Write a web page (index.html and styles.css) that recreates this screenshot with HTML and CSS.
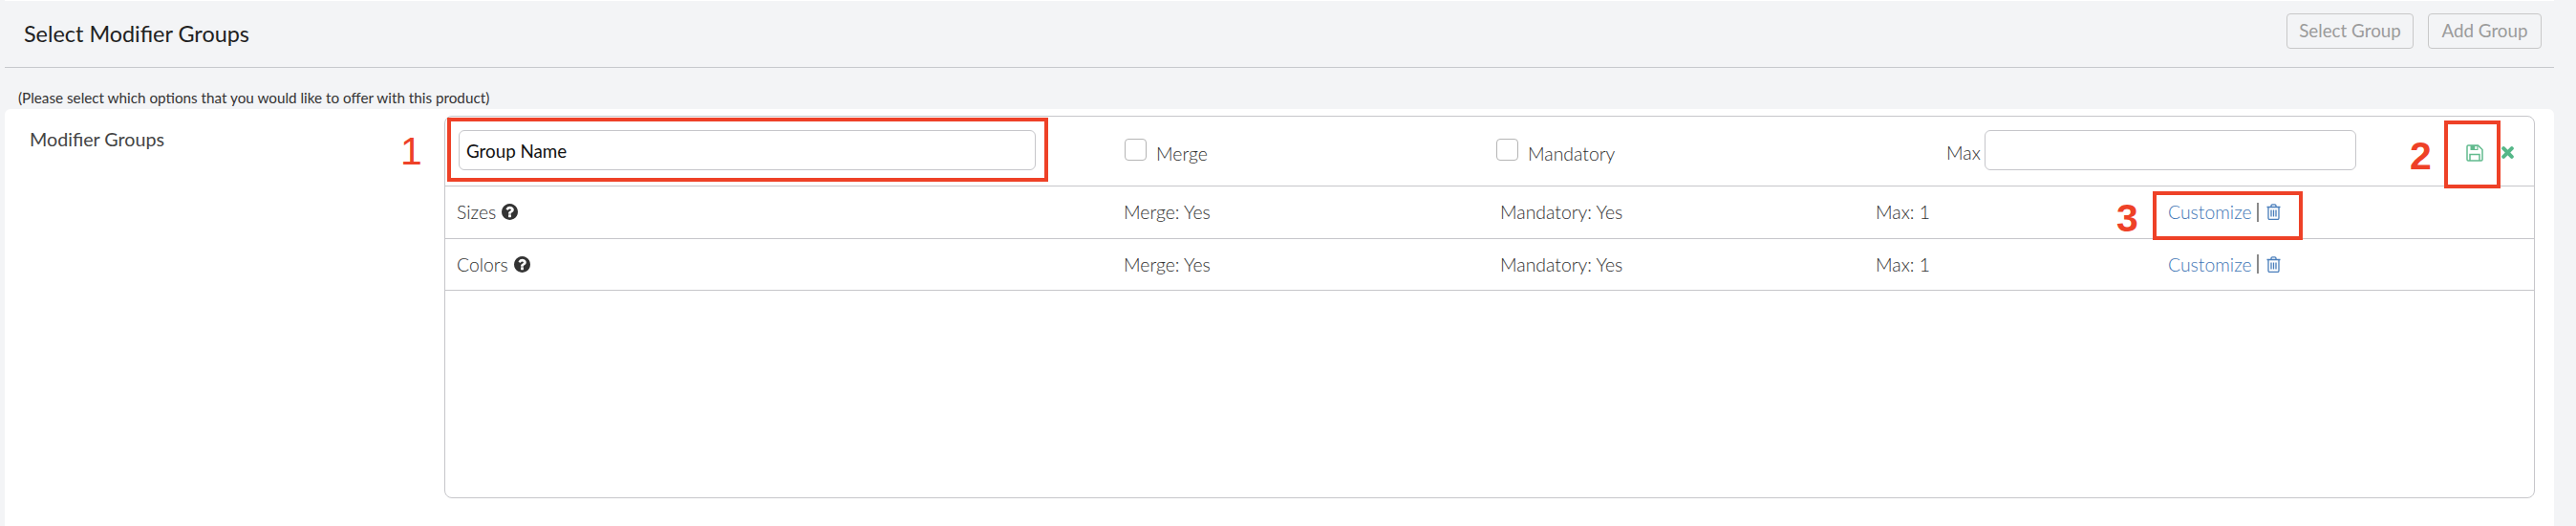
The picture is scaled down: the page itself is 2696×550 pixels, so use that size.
FILE: index.html
```html
<!DOCTYPE html>
<html lang="en">
<head>
<meta charset="utf-8">
<title>Select Modifier Groups</title>
<link rel="stylesheet" href="styles.css">
</head>
<body>
<div class="page">
  <header class="head">
    <h1 class="title">Select Modifier Groups</h1>
    <div class="head-actions">
      <button class="btn btn-select" type="button">Select Group</button>
      <button class="btn btn-add" type="button">Add Group</button>
    </div>
  </header>
  <p class="note">(Please select which options that you would like to offer with this product)</p>
  <section class="panel">
    <div class="panel-label">Modifier Groups</div>
    <div class="table">
      <div class="row-edit">
        <div class="cell-name"><input class="field field-name" type="text" placeholder="Group Name"></div>
        <label class="check"><span class="box"></span>Merge</label>
        <label class="check"><span class="box"></span>Mandatory</label>
        <div class="cell-max"><span class="max-label">Max</span><input class="field field-max" type="text"></div>
        <div class="cell-tools">
          <svg class="ico-save" viewBox="0 0 18 18" aria-hidden="true"><path class="line" d="M1 2.2A1.2 1.2 0 0 1 2.200 1H12.500L17 5.500V15.800A1.200 1.200 0 0 1 15.800 17H2.200A1.200 1.200 0 0 1 1 15.800Z"/><path class="line" d="M4 17V10.500H14V17"/><path class="solid" d="M4.500 1H12.500V6H4.500Z"/><path class="hole" d="M9.300 2H11.300V5H9.300Z"/></svg>
          <svg class="ico-x" viewBox="0 0 13 13" aria-hidden="true"><path d="M2.200 2.200L10.800 10.800M10.800 2.200L2.200 10.800"/></svg>
        </div>
      </div>
      <div class="row">
        <div class="name">Sizes <svg class="ico-help" viewBox="0 0 1536 1536" aria-hidden="true"><path d="M896 1248v-192q0-14-9-23t-23-9h-192q-14 0-23 9t-9 23v192q0 14 9 23t23 9h192q14 0 23-9t9-23zm256-672q0-88-55.500-163t-138.500-116-170-41q-243 0-371 213-15 24 8 42l132 100q7 6 19 6 16 0 25-12 53-68 86-92 34-24 86-24 48 0 85.500 26t37.500 59q0 38-20 61t-68 45q-63 28-115.500 86.500t-52.500 125.500v36q0 14 9 23t23 9h192q14 0 23-9t9-23q0-19 21.500-49.500t54.500-49.500q32-18 49-28.500t46-35 44.500-48 28-60.500 12.500-81zm384 192q0 209-103 385.500t-279.500 279.500-385.500 103-385.500-103-279.500-279.500-103-385.500 103-385.500 279.500-279.500 385.500-103 385.500 103 279.500 279.500 103 385.500z"/></svg></div>
        <div>Merge: Yes</div>
        <div>Mandatory: Yes</div>
        <div>Max: 1</div>
        <div class="links"><a class="link">Customize</a><span class="sep"></span><svg class="ico-trash" viewBox="0 0 15 17" aria-hidden="true"><path d="M.5 3.500H14.500M2 3.500V15A1.500 1.500 0 0 0 3.500 16.500H11.500A1.500 1.500 0 0 0 13 15V3.500M5 3.500V1.800A1.200 1.200 0 0 1 6.200.8H8.800A1.200 1.200 0 0 1 10 1.800V3.500M5 6.500V13.500M7.500 6.500V13.500M10 6.500V13.500"/></svg></div>
      </div>
      <div class="row row-short">
        <div class="name">Colors <svg class="ico-help" viewBox="0 0 1536 1536" aria-hidden="true"><path d="M896 1248v-192q0-14-9-23t-23-9h-192q-14 0-23 9t-9 23v192q0 14 9 23t23 9h192q14 0 23-9t9-23zm256-672q0-88-55.500-163t-138.500-116-170-41q-243 0-371 213-15 24 8 42l132 100q7 6 19 6 16 0 25-12 53-68 86-92 34-24 86-24 48 0 85.500 26t37.500 59q0 38-20 61t-68 45q-63 28-115.500 86.500t-52.500 125.500v36q0 14 9 23t23 9h192q14 0 23-9t9-23q0-19 21.500-49.500t54.500-49.500q32-18 49-28.500t46-35 44.500-48 28-60.500 12.500-81zm384 192q0 209-103 385.500t-279.500 279.500-385.500 103-385.500-103-279.500-279.500-103-385.500 103-385.500 279.500-279.500 385.500-103 385.500 103 279.500 279.500 103 385.500z"/></svg></div>
        <div>Merge: Yes</div>
        <div>Mandatory: Yes</div>
        <div>Max: 1</div>
        <div class="links"><a class="link">Customize</a><span class="sep"></span><svg class="ico-trash" viewBox="0 0 15 17" aria-hidden="true"><path d="M.5 3.500H14.500M2 3.500V15A1.500 1.500 0 0 0 3.500 16.500H11.500A1.500 1.500 0 0 0 13 15V3.500M5 3.500V1.800A1.200 1.200 0 0 1 6.200.8H8.800A1.200 1.200 0 0 1 10 1.800V3.500M5 6.500V13.500M7.500 6.500V13.500M10 6.500V13.500"/></svg></div>
      </div>
    </div>
  </section>
  <div class="mark mark-1"></div>
  <div class="mark mark-2"></div>
  <div class="mark mark-3"></div>
  <span class="num num-1">1</span>
  <span class="num num-2">2</span>
  <span class="num num-3">3</span>
</div>
</body>
</html>
```
FILE: styles.css
```css
* { box-sizing: border-box; }
html, body { margin: 0; height: 100%; overflow: hidden; }
body {
  background: #f3f4f6;
  color: #333;
  font-family: Lato, "Liberation Sans", sans-serif;
}
.page {
  position: relative;
  height: 550px;
  padding: 0 23px 0 5px;
  display: flex;
  flex-direction: column;
}
.head {
  height: 71px;
  flex: none;
  border-top: 1px solid #fff;
  border-bottom: 1px solid #c6c8cc;
  padding: 13px 13px 0 20px;
  display: flex;
  justify-content: space-between;
  align-items: flex-start;
}
.title {
  margin: 6px 0 0;
  font-size: 23.4px;
  line-height: 30px;
  font-weight: 400;
  color: #222;
}
.head-actions { display: flex; gap: 15px; }
.btn {
  height: 37px;
  background: transparent;
  border: 1px solid #c8c8c8;
  border-radius: 4px;
  color: #9b9b9b;
  font: 400 18.8px/1 Lato, sans-serif;
  padding: 0;
}
.btn-select { width: 133px; }
.btn-add { width: 119px; }
.note {
  margin: 0;
  height: 43px;
  flex: none;
  padding: 20px 0 0 14px;
  font-size: 15.25px;
  line-height: 22px;
  color: #333;
}
.panel {
  flex: 1;
  background: #fff;
  border-radius: 6px 6px 0 0;
  display: flex;
  align-items: flex-start;
}
.panel-label {
  width: 460px;
  flex: none;
  padding: 20px 0 0 26px;
  font-size: 19.7px;
  line-height: 24px;
  color: #444;
}
.table {
  width: 2188px;
  height: 400px;
  margin-top: 7px;
  border: 1px solid #c6c6ca;
  border-radius: 8px;
  font-size: 19.4px;
  font-weight: 300;
  color: #2f2f2f;
}
.row-edit {
  height: 73px;
  padding-bottom: 2px;
  border-bottom: 1px solid #c6c6ca;
  display: grid;
  grid-template-columns: 711px 389px 471px 429px 1fr;
  align-items: center;
}
.row {
  height: 55px;
  border-bottom: 1px solid #c6c6ca;
  display: grid;
  grid-template-columns: 710px 394px 393px 306px 1fr;
  align-items: center;
  padding-bottom: 1px;
}
.row-short { height: 54px; }
.cell-name { padding-left: 14px; }
.field {
  height: 42px;
  border: 1px solid #c6c6ca;
  border-radius: 6px;
  background: #fff;
  display: block;
  outline: none;
}
.field-name {
  width: 604px;
  padding: 0 7px;
  font: 400 18.8px Lato, sans-serif;
}
.field-name::placeholder { color: #111; opacity: 1; }
.field-max { width: 389px; flex: none; }
.check {
  display: flex;
  align-items: center;
  gap: 10px;
  padding-top: 6px;
}
.box {
  width: 23px;
  height: 23px;
  margin-top: -7px;
  border: 1px solid #b5b5b5;
  border-radius: 4px;
}
.cell-max {
  display: flex;
  align-items: center;
  gap: 6px;
}
.max-label { width: 34px; flex: none; padding-top: 4px; white-space: nowrap; }
.cell-tools {
  display: flex;
  align-items: center;
  gap: 19px;
  padding: 5px 0 0 115px;
}
.name {
  padding-left: 12px;
  display: flex;
  align-items: center;
  gap: 6px;
}
.ico-help { width: 17px; height: 17px; fill: #333; }
.ico-save { width: 18px; height: 18px; }
.ico-save .line { fill: none; stroke: #62bb8e; stroke-width: 1.5; }
.ico-save .solid { fill: #62bb8e; }
.ico-save .hole { fill: #fff; }
.ico-x { width: 13px; height: 13px; }
.ico-x path { fill: none; stroke: #55b788; stroke-width: 4; stroke-linecap: round; }
.links { display: flex; align-items: center; }
.link { color: #3f76b5; width: 85px; white-space: nowrap; }
.sep { width: 2px; height: 20px; background: #8a8a8a; margin: 0 8px; }
.ico-trash { width: 15px; height: 17px; }
.ico-trash path { fill: none; stroke: #4a7ebb; stroke-width: 1.300; }
.mark {
  position: absolute;
  border: 4px solid #ee4127;
}
.mark-1 { left: 468px; top: 123px; width: 629px; height: 67px; }
.mark-2 { left: 2558px; top: 126px; width: 59px; height: 71px; }
.mark-3 { left: 2253px; top: 200px; width: 157px; height: 51px; }
.num {
  position: absolute;
  color: #ee4127;
  font-family: "Liberation Sans", sans-serif;
  font-size: 41px;
  line-height: 40px;
}
.num-1 { left: 419px; top: 138px; }
.num-2 { left: 2522px; top: 143px; font-weight: 700; }
.num-3 { left: 2215px; top: 208px; font-weight: 700; }
```
